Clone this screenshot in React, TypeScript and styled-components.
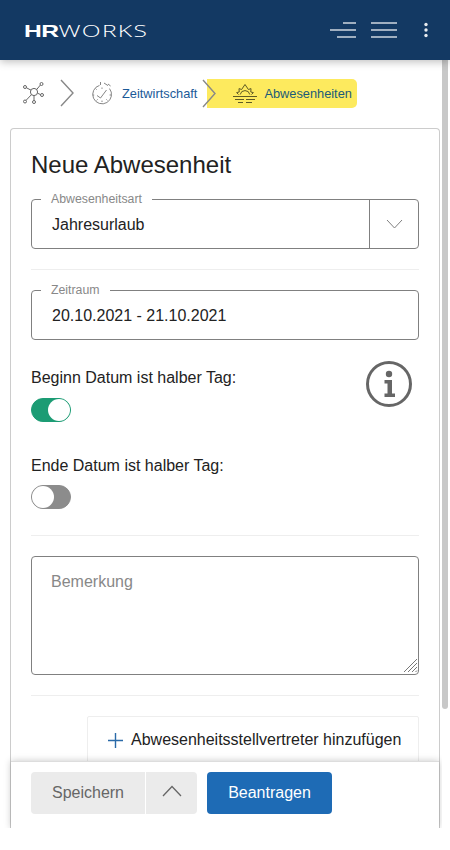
import React from 'react'
import styled, { createGlobalStyle } from 'styled-components'

const GlobalStyle = createGlobalStyle`
  html, body {
    margin: 0;
    padding: 0;
    background: #ffffff;
    overflow: hidden;
  }
  * {
    box-sizing: border-box;
  }
`

const Page = styled.div`
  width: 450px;
  height: 850px;
  display: flex;
  flex-direction: column;
  font-family: 'Liberation Sans', Arial, sans-serif;
  color: #222222;
  background: #ffffff;
`

const Header = styled.header`
  height: 60px;
  flex: none;
  display: flex;
  align-items: center;
  justify-content: space-between;
  padding-left: 24px;
  background: #133963;
  box-shadow: 0 2px 8px rgba(0, 0, 0, 0.25);
  position: relative;
  z-index: 5;
`

const Logo = styled.div`
  font-size: 17px;
  line-height: 20px;
  padding-top: 2px;
  color: #ffffff;
  white-space: nowrap;
  font-family: 'Open Sans', 'Liberation Sans', sans-serif;
  font-weight: 300;
  letter-spacing: 0.9px;
  transform: scaleX(1.45);
  transform-origin: left center;
`

const LogoBold = styled.span`
  font-family: 'Liberation Sans', Arial, sans-serif;
  font-weight: 700;
  letter-spacing: -0.4px;
`

const HeaderIcons = styled.div`
  display: flex;
  align-items: center;
  gap: 15px;
  padding-right: 22px;
`

const HeaderDots = styled.svg`
  margin-left: 12px;
`

const Body = styled.div`
  height: 768px;
  flex: none;
  display: flex;
`

const Main = styled.main`
  width: 442px;
  display: flex;
  flex-direction: column;
  overflow: hidden;
  padding: 0 2px 0 10px;
`

const ScrollThumb = styled.div`
  width: 6px;
  height: 649px;
  background: #c8c8c8;
  border-radius: 0 0 3px 3px;
`

const Breadcrumbs = styled.nav`
  height: 68px;
  flex: none;
  display: flex;
  align-items: center;
  padding-left: 13px;
  padding-bottom: 2px;
`

const CrumbLink = styled.span`
  font-size: 12.8px;
  color: #1b5a98;
  margin-left: 9px;
  margin-right: 5px;
`

const CrumbChevron = styled.svg<{ $gapLeft?: number; $gapRight?: number }>`
  flex: none;
  position: relative;
  z-index: 1;
  margin-left: ${(p) => p.$gapLeft ?? 0}px;
  margin-right: ${(p) => p.$gapRight ?? 0}px;
`

const ActiveCrumb = styled.div`
  width: 150px;
  height: 29px;
  margin-left: -9px;
  padding-left: 26px;
  display: flex;
  align-items: center;
  gap: 7px;
  background: #fdea5e;
  border-radius: 0 5px 5px 0;
  font-size: 12.8px;
  color: #1b5a78;
`

const Card = styled.section`
  flex: 1;
  min-height: 0;
  display: flex;
  flex-direction: column;
  border: 1px solid #cccccc;
  border-bottom: none;
  border-radius: 4px 4px 0 0;
`

const FormArea = styled.div`
  flex: 1;
  min-height: 0;
  overflow: hidden;
  padding: 23px 20px 0;
`

const Title = styled.h1`
  margin: 0 0 14px;
  font-size: 24px;
  line-height: 26px;
  font-weight: 400;
  color: #222222;
`

const Field = styled.fieldset`
  margin: 0;
  padding: 0;
  min-width: 0;
  border: 1px solid #808080;
  border-radius: 4px;
`

const FieldLegend = styled.legend`
  margin-left: 9px;
  padding: 0 10px;
  font-size: 12.3px;
  line-height: 14px;
  color: #888888;
`

const FieldBody = styled.div`
  height: 42px;
  display: flex;
`

const FieldValue = styled.div`
  flex: 1;
  display: flex;
  align-items: center;
  padding: 0 0 5px 20px;
  font-size: 16px;
  color: #222222;
`

const SelectButton = styled.div`
  width: 49px;
  height: 49px;
  margin-top: -7px;
  display: flex;
  align-items: center;
  justify-content: center;
  border-left: 1px solid #808080;
`

const Divider = styled.hr<{ $top?: number; $bottom?: number }>`
  margin: ${(p) => p.$top ?? 20}px 0 ${(p) => p.$bottom ?? 20}px;
  border: none;
  border-top: 1px solid #eeeeee;
`

const HalfDayRow = styled.div`
  margin-top: 21px;
  display: flex;
  justify-content: space-between;
  align-items: flex-start;
  padding-right: 7px;
`

const HalfDayColumn = styled.div`
  padding-top: 8px;
`

const ToggleLabel = styled.div<{ $gap: number }>`
  font-size: 16px;
  line-height: 18px;
  margin-bottom: ${(p) => p.$gap}px;
  color: #222222;
`

const Toggle = styled.div<{ $on?: boolean }>`
  width: 40px;
  height: 24px;
  display: flex;
  justify-content: ${(p) => (p.$on ? 'flex-end' : 'flex-start')};
  border-radius: 12px;
  border: 1px solid ${(p) => (p.$on ? '#1c9c74' : '#8c8c8c')};
  background: ${(p) => (p.$on ? '#1c9c74' : '#8c8c8c')};
  margin-bottom: 35px;

  &:last-child {
    margin-bottom: 0;
  }
`

const ToggleKnob = styled.div`
  width: 22px;
  height: 22px;
  border-radius: 50%;
  background: #ffffff;
`

const RemarkWrap = styled.div`
  position: relative;
  height: 119px;
`

const RemarkInput = styled.textarea`
  display: block;
  width: 100%;
  height: 100%;
  padding: 16px 19px;
  border: 1px solid #808080;
  border-radius: 4px;
  outline: none;
  resize: none;
  font-family: 'Liberation Sans', Arial, sans-serif;
  font-size: 16px;
  line-height: 18px;
  color: #222222;

  &::placeholder {
    color: #888888;
    opacity: 1;
  }
`

const ResizeGrip = styled.svg`
  position: absolute;
  right: 1px;
  bottom: 2px;
`

const AddDeputyButton = styled.div`
  width: 332px;
  height: 48px;
  margin-left: auto;
  display: flex;
  align-items: center;
  gap: 8px;
  padding-left: 20px;
  border: 1px solid #eeeeee;
  border-radius: 2px;
  font-size: 16px;
  color: #222222;
  white-space: nowrap;
`

const Footer = styled.footer`
  height: 67px;
  flex: none;
  display: flex;
  padding: 10px 20px 0;
  background: #ffffff;
  border-top: 1px solid #dddddd;
  box-shadow: 0 0 7px rgba(0, 0, 0, 0.22);
  position: relative;
  z-index: 2;
`

const SaveButton = styled.div`
  width: 114px;
  height: 42px;
  display: flex;
  align-items: center;
  justify-content: center;
  background: #ebebeb;
  border-radius: 4px 0 0 4px;
  font-size: 16px;
  color: #666666;
`

const SaveMenuButton = styled.div`
  width: 51px;
  height: 42px;
  margin-left: 1px;
  display: flex;
  justify-content: center;
  padding-top: 13px;
  background: #ebebeb;
  border-radius: 0 4px 4px 0;
`

const SubmitButton = styled.div`
  width: 125px;
  height: 42px;
  margin-left: 10px;
  display: flex;
  align-items: center;
  justify-content: center;
  background: #1e6bb5;
  border-radius: 4px;
  font-size: 16px;
  color: #ffffff;
`

const LinesIcon = ({ first, last }: { first: number; last: number }) => (
  <svg width="26" height="16" viewBox="0 0 26 16" stroke="#ffffff" strokeWidth="1.2">
    <line x1={first} y1="1" x2="26" y2="1" />
    <line x1="0" y1="8" x2="26" y2="8" />
    <line x1={last} y1="15" x2="26" y2="15" />
  </svg>
)

const DotsIcon = () => (
  <HeaderDots width="4" height="16" viewBox="0 0 4 16" fill="#ffffff" opacity="0.9">
    <circle cx="2" cy="2.5" r="1.7" />
    <circle cx="2" cy="8" r="1.7" />
    <circle cx="2" cy="13.5" r="1.7" />
  </HeaderDots>
)

const NetworkIcon = () => (
  <svg width="22" height="22" viewBox="0 0 22 22" fill="none" stroke="#666666" strokeWidth="1">
    <circle cx="11" cy="10" r="3.6" />
    <circle cx="2" cy="5" r="1.5" />
    <circle cx="18.5" cy="2" r="1.5" />
    <circle cx="19" cy="13" r="1.5" />
    <circle cx="11" cy="20" r="1.5" />
    <circle cx="2" cy="19.5" r="1.5" />
    <path d="M3.3 5.7 8 8.2M17.4 3 13.6 7.6M17.6 12.6 14.5 11.2M11 18.5V13.6M3 18.4 8.5 12.6" />
  </svg>
)

const ClockIcon = () => (
  <svg width="22" height="24" viewBox="0 0 22 24" fill="none" stroke="#777777" strokeWidth="0.9">
    <path d="M8.5 4.4a9.4 9.4 0 1 0 10 3.2" />
    <path d="M9.5 1v3M13 2l4 2.6M17 3l2.6 2M6 14.5l3.5 2.5 6-8" />
    <path d="M11 6.5v1.4M11 21v-1.4M1.8 14h1.4M20 14h-1.4M4.6 7.6l1 1M5.6 19.4l1-1M16.4 19.4l-1-1" />
  </svg>
)

const SunsetIcon = () => (
  <svg width="24" height="20" viewBox="0 0 24 20" fill="none" stroke="#5e5a24" strokeWidth="1">
    <path d="M5.5 11.5 3.6 9.6l2.6-.6-.2-3.4 2.6.9L12 1.5l3.4 5 2.6-.9-.2 3.4 2.6.6-1.9 1.9" />
    <path d="M7.2 11.5a4.9 4.9 0 0 1 9.6 0" />
    <path d="M0 13.5h24M2 16.5h9M13 16.5h9M5 19.5h5M13 19.5h6" />
  </svg>
)

const InfoIcon = () => (
  <svg width="46" height="46" viewBox="0 0 46 46">
    <circle cx="23" cy="23" r="21.5" fill="none" stroke="#666666" strokeWidth="3" />
    <circle cx="23" cy="13" r="3.2" fill="#666666" />
    <path d="M18.5 19h7.5v13.5h3V36H18.5v-3.5h3V22.5h-3z" fill="#666666" />
  </svg>
)

const App = () => (
  <Page>
    <GlobalStyle />
    <Header>
      <Logo>
        <LogoBold>HR</LogoBold>WORKS
      </Logo>
      <HeaderIcons>
        <LinesIcon first={13} last={7} />
        <LinesIcon first={0} last={0} />
        <DotsIcon />
      </HeaderIcons>
    </Header>
    <Body>
      <Main>
        <Breadcrumbs>
          <NetworkIcon />
          <CrumbChevron $gapLeft={15} $gapRight={17} width="14" height="28" viewBox="0 0 14 28" fill="none" stroke="#888888" strokeWidth="1.4">
            <path d="M1 1 13 14 1 27" />
          </CrumbChevron>
          <ClockIcon />
          <CrumbLink>Zeitwirtschaft</CrumbLink>
          <CrumbChevron width="14" height="29" viewBox="0 0 14 29" fill="none" stroke="#888888" strokeWidth="1.4">
            <path d="M1 1 13 14.5 1 28" />
          </CrumbChevron>
          <ActiveCrumb>
            <SunsetIcon />
            Abwesenheiten
          </ActiveCrumb>
        </Breadcrumbs>
        <Card>
          <FormArea>
            <Title>Neue Abwesenheit</Title>
            <Field>
              <FieldLegend>Abwesenheitsart</FieldLegend>
              <FieldBody>
                <FieldValue>Jahresurlaub</FieldValue>
                <SelectButton>
                  <svg width="17" height="10" viewBox="0 0 17 10" fill="none" stroke="#808080" strokeWidth="1">
                    <path d="M1 1l7.5 8L16 1" />
                  </svg>
                </SelectButton>
              </FieldBody>
            </Field>
            <Divider $bottom={13} />
            <Field>
              <FieldLegend>Zeitraum</FieldLegend>
              <FieldBody>
                <FieldValue>20.10.2021 - 21.10.2021</FieldValue>
              </FieldBody>
            </Field>
            <HalfDayRow>
              <HalfDayColumn>
                <ToggleLabel $gap={11}>Beginn Datum ist halber Tag:</ToggleLabel>
                <Toggle $on>
                  <ToggleKnob />
                </Toggle>
                <ToggleLabel $gap={10}>Ende Datum ist halber Tag:</ToggleLabel>
                <Toggle>
                  <ToggleKnob />
                </Toggle>
              </HalfDayColumn>
              <InfoIcon />
            </HalfDayRow>
            <Divider $top={26} />
            <RemarkWrap>
              <RemarkInput placeholder="Bemerkung" readOnly />
              <ResizeGrip width="15" height="15" viewBox="0 0 15 15" stroke="#777777" strokeWidth="1">
                <path d="M1 14 14 1M5 14l9-9M9 14l5-5M12.5 14l1.5-1.5" />
              </ResizeGrip>
            </RemarkWrap>
            <Divider />
            <AddDeputyButton>
              <svg width="15" height="15" viewBox="0 0 15 15" stroke="#2a6aa8" strokeWidth="1.4">
                <path d="M7.5 0v15M0 7.5h15" />
              </svg>
              Abwesenheitsstellvertreter hinzufügen
            </AddDeputyButton>
          </FormArea>
          <Footer>
            <SaveButton>Speichern</SaveButton>
            <SaveMenuButton>
              <svg width="20" height="12" viewBox="0 0 20 12" fill="none" stroke="#666666" strokeWidth="1.3">
                <path d="M1 11l9-9.5L19 11" />
              </svg>
            </SaveMenuButton>
            <SubmitButton>Beantragen</SubmitButton>
          </Footer>
        </Card>
      </Main>
      <ScrollThumb />
    </Body>
  </Page>
)

export default App
